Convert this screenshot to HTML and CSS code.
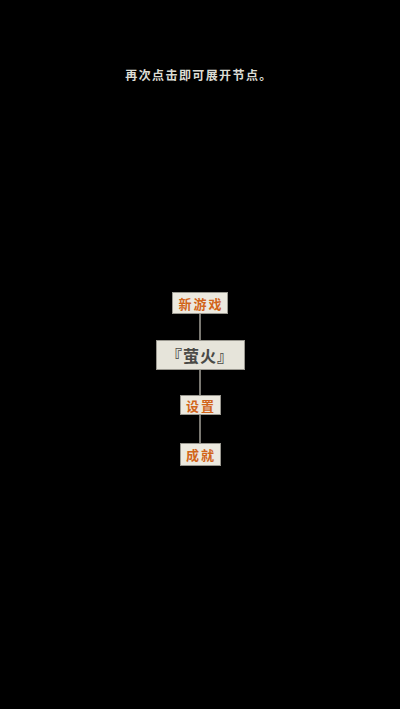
FILE: index.html
```html
<!DOCTYPE html>
<html lang="zh-CN">
<head>
  <meta charset="UTF-8">
  <meta name="viewport" content="width=device-width, initial-scale=1.0">
  <title>萤火</title>
  <link rel="stylesheet" href="styles.css">
</head>
<body>
  <div class="screen">
    <p class="hint">再次点击即可展开节点。</p> <!--top tip-->
    <div class="tree">
      <div class="node action">新游戏</div>
      <div class="link link-a"></div>
      <div class="node root">『萤火』</div>
      <div class="link link-b"></div>
      <div class="node action small">设置</div>
      <div class="link link-c"></div>
      <div class="node action small tall">成就</div>
    </div>
  </div>
</body>
</html>
```

FILE: styles.css
```css
body {
  margin: 0;
  padding: 0;
  background: #000;
  font-family: "Noto Sans CJK SC", "Noto Sans", sans-serif;
}

.screen {
  width: 400px;
  height: 709px;
  overflow: hidden;
}

.hint {
  margin: 0;
  padding-top: 66px;
  text-align: center;
  color: #dcdcd4;
  font-size: 12px;
  font-weight: bold;
  letter-spacing: 1.4px;
  line-height: 18px;
  padding-right: 2px;
}

.tree {
  display: flex;
  flex-direction: column;
  align-items: center;
  margin-top: 208px;
}

.node {
  box-sizing: border-box;
  display: flex;
  align-items: center;
  justify-content: center;
  background: #ece9df;
  border: 1px solid #9a9890;
}

.action {
  width: 56px;
  height: 22px;
  color: #d2651a;
  font-size: 13px;
  font-weight: bold;
  letter-spacing: 2px;
  padding-left: 2px;
}

.small {
  width: 41px;
  height: 20px;
}

.tall {
  height: 23px;
}

.root {
  width: 89px;
  height: 30px;
  background: #e6e4da;
  color: #4a4a46;
  font-size: 16px;
  font-weight: bold;
  letter-spacing: 1px;
}

.link {
  width: 2px;
  background: #7a7872;
}

.link-a { height: 26px; }
.link-b { height: 25px; }
.link-c { height: 28px; }
```
